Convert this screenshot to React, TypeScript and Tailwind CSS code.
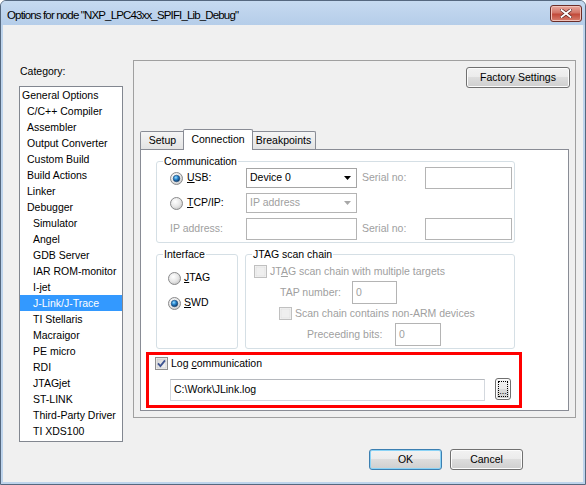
import React from "react";

const categories: { label: string; level: number; selected?: boolean }[] = [
  { label: "General Options", level: 0 },
  { label: "C/C++ Compiler", level: 1 },
  { label: "Assembler", level: 1 },
  { label: "Output Converter", level: 1 },
  { label: "Custom Build", level: 1 },
  { label: "Build Actions", level: 1 },
  { label: "Linker", level: 1 },
  { label: "Debugger", level: 1 },
  { label: "Simulator", level: 2 },
  { label: "Angel", level: 2 },
  { label: "GDB Server", level: 2 },
  { label: "IAR ROM-monitor", level: 2 },
  { label: "I-jet", level: 2 },
  { label: "J-Link/J-Trace", level: 2, selected: true },
  { label: "TI Stellaris", level: 2 },
  { label: "Macraigor", level: 2 },
  { label: "PE micro", level: 2 },
  { label: "RDI", level: 2 },
  { label: "JTAGjet", level: 2 },
  { label: "ST-LINK", level: 2 },
  { label: "Third-Party Driver", level: 2 },
  { label: "TI XDS100", level: 2 },
];

function Radio({ checked }: { checked?: boolean }) {
  return (
    <svg width="13" height="13" viewBox="0 0 13 13" className="shrink-0">
      <defs>
        <radialGradient id="radioBg" cx="40%" cy="35%" r="70%">
          <stop offset="0" stopColor="#ffffff" />
          <stop offset="0.6" stopColor="#e6e6e6" />
          <stop offset="1" stopColor="#c4c4c4" />
        </radialGradient>
        <radialGradient id="radioDot" cx="40%" cy="35%" r="65%">
          <stop offset="0" stopColor="#9fe0ff" />
          <stop offset="0.45" stopColor="#2b8ad2" />
          <stop offset="1" stopColor="#0c3766" />
        </radialGradient>
      </defs>
      <circle cx="6.5" cy="6.5" r="6" fill="url(#radioBg)" stroke="#8a8b8c" />
      {checked && <circle cx="6.5" cy="6.5" r="3.3" fill="url(#radioDot)" stroke="#1c4a78" strokeWidth="0.6" />}
    </svg>
  );
}

function Check({ checked, disabled }: { checked?: boolean; disabled?: boolean }) {
  return (
    <svg width="13" height="13" viewBox="0 0 13 13" className="shrink-0">
      <defs>
        <linearGradient id="checkBg" x1="0" y1="0" x2="1" y2="1">
          <stop offset="0" stopColor="#d6d6d6" />
          <stop offset="1" stopColor="#f6f6f6" />
        </linearGradient>
      </defs>
      <rect x="0.5" y="0.5" width="12" height="12" fill="#f4f4f4" stroke={disabled ? "#c0c0c0" : "#8f8f8f"} />
      <rect x="2" y="2" width="9" height="9" fill={disabled ? "#efefef" : "url(#checkBg)"} stroke={disabled ? "#dcdcdc" : "#c2c2c2"} strokeWidth="0.6" />
      {checked && <path d="M3 6.3 L5.4 9 L10 3.4" fill="none" stroke="#3d5391" strokeWidth="1.8" />}
    </svg>
  );
}

function Arrow({ color }: { color: string }) {
  return (
    <svg width="7" height="4" viewBox="0 0 7 4" className="shrink-0">
      <path d="M0 0 H7 L3.5 4 Z" fill={color} />
    </svg>
  );
}

function Group({ legend, className, children }: { legend: string; className: string; children: React.ReactNode }) {
  return (
    <div className={`relative rounded-[3px] border border-[#d5dfe5] ${className}`}>
      <span className="absolute left-[6px] -top-[8px] bg-white px-[1px] leading-[14px] text-black">{legend}</span>
      {children}
    </div>
  );
}

const button =
  "flex items-center justify-center rounded-[3px] border border-[#707070] bg-[linear-gradient(#f2f2f2,#ebebeb_50%,#dddddd_50%,#cfcfcf)] shadow-[inset_0_0_0_1px_#fcfcfc] text-black";

export default function App() {
  return (
    <div className="w-[586px] h-[485px] bg-white font-['Liberation_Sans',Arial,sans-serif] text-[10.5px] text-black">
      <div className="flex h-full w-full flex-col rounded-t-[6px] border border-[#55687f] bg-[#bed4ec]">
        {/* Title bar */}
        <div className="flex h-[24px] shrink-0 rounded-t-[5px] bg-[linear-gradient(#c6daf0,#b5cde9)]">
          <div className="flex-1 whitespace-nowrap pl-[6px] pt-[7px] text-[11.5px] leading-[14px] tracking-[-0.85px] text-black">
            {'Options for node "NXP_LPC43xx_SPIFI_Lib_Debug"'}
          </div>
          <div className="mt-[4px] mr-[3px] flex h-[17px] w-[32px] items-center justify-center rounded-[3px] border border-[#6b2d28] bg-[linear-gradient(#e9a99f,#d27567_45%,#c24a3a_55%,#d7806f)] shadow-[inset_0_0_0_1px_#f1c3bb]">
            <svg width="12" height="9" viewBox="0 0 12 9">
              <path d="M1.5 1 L10.5 8 M10.5 1 L1.5 8" stroke="#5a2320" strokeWidth="3.2" strokeLinecap="square" />
              <path d="M1.5 1 L10.5 8 M10.5 1 L1.5 8" stroke="#ffffff" strokeWidth="1.8" strokeLinecap="square" />
            </svg>
          </div>
        </div>

        {/* Client area */}
        <div className="mx-[2px] mb-[2px] flex-1 bg-[#f0f0f0]">
          <div className="flex items-start pl-[16px] pt-[35px]">
            {/* Category column */}
            <div className="w-[104px] shrink-0">
              <div className="mt-[4px] h-[14px] pl-[1px] leading-[14px]">Category:</div>
              <div className="mt-[8px] h-[356px] border border-[#828790] bg-white">
                {categories.map((c) => (
                  <div
                    key={c.label}
                    className={`h-[16px] whitespace-nowrap leading-[16px] ${
                      c.level === 0 ? "pl-[2px]" : c.level === 1 ? "pl-[7px]" : "pl-[13px]"
                    } ${c.selected ? "bg-[#3399ff] text-white" : ""}`}
                  >
                    {c.label}
                  </div>
                ))}
              </div>
            </div>

            {/* Options column */}
            <div className="ml-[10px] flex w-[443px] shrink-0 flex-col">
              <div className="flex h-[358px] flex-col border border-[#a0a0a0]">
                <div className={`${button} mt-[6px] mr-[5px] h-[21px] w-[104px] self-end`}>Factory Settings</div>

                {/* Tabs */}
                <div className="ml-[6px] mt-[41px] flex h-[20px] items-end">
                  <div className="flex h-[18px] w-[45px] items-center justify-center rounded-t-[2px] border border-b-0 border-[#898c95] bg-[linear-gradient(#f5f5f5,#e3e3e3)]">
                    Setup
                  </div>
                  <div className="relative z-10 -mb-[1px] -ml-[2px] flex h-[21px] w-[70px] items-start justify-center rounded-t-[2px] border border-b-0 border-[#898c95] bg-white pt-[2px] leading-[14px]">
                    Connection
                  </div>
                  <div className="-ml-[2px] flex h-[18px] w-[65px] items-center justify-center rounded-t-[2px] border border-b-0 border-[#898c95] bg-[linear-gradient(#f5f5f5,#e3e3e3)]">
                    Breakpoints
                  </div>
                </div>

                {/* Tab page */}
                <div className="ml-[6px] flex h-[262px] w-[429px] flex-col border border-[#898c95] bg-white">
                  <Group legend="Communication" className="ml-[15px] mt-[11px] h-[82px] w-[359px]">
                    <div className="mt-[5px] flex h-[22px] items-center pl-[13px]">
                      <div className="flex w-[76px] items-center gap-[4px]">
                        <Radio checked />
                        <span>
                          <span className="underline">U</span>SB:
                        </span>
                      </div>
                      <div className="flex h-[20px] w-[111px] items-center justify-between border border-[#a5a5a5] bg-white pl-[3px] pr-[5px]">
                        <span>Device 0</span>
                        <Arrow color="#000000" />
                      </div>
                      <span className="w-[68px] pl-[5px] text-[#a0a0a0]">Serial no:</span>
                      <div className="h-[22px] w-[87px] border border-[#b4b4b4] bg-white" />
                    </div>
                    <div className="mt-[4px] flex h-[20px] items-center pl-[13px]">
                      <div className="flex w-[76px] items-center gap-[4px]">
                        <Radio />
                        <span>
                          <span className="underline">T</span>CP/IP:
                        </span>
                      </div>
                      <div className="flex h-[20px] w-[111px] items-center justify-between border border-[#b4b4b4] bg-white pl-[3px] pr-[5px] text-[#a0a0a0]">
                        <span>IP address</span>
                        <Arrow color="#a8a8a8" />
                      </div>
                    </div>
                    <div className="mt-[5px] flex h-[22px] items-center pl-[13px]">
                      <span className="w-[76px] text-[#a0a0a0]">IP address:</span>
                      <div className="h-[22px] w-[111px] border border-[#b4b4b4] bg-white" />
                      <span className="w-[68px] pl-[5px] text-[#a0a0a0]">Serial no:</span>
                      <div className="h-[22px] w-[87px] border border-[#b4b4b4] bg-white" />
                    </div>
                  </Group>

                  <div className="ml-[15px] mt-[11px] flex">
                    <Group legend="Interface" className="h-[95px] w-[82px]">
                      <div className="mt-[15px] flex h-[16px] items-center gap-[3px] pl-[11px]">
                        <Radio />
                        <span>
                          <span className="underline">J</span>TAG
                        </span>
                      </div>
                      <div className="mt-[9px] flex h-[16px] items-center gap-[3px] pl-[11px]">
                        <Radio checked />
                        <span>
                          <span className="underline">S</span>WD
                        </span>
                      </div>
                    </Group>

                    <Group legend="JTAG scan chain" className="ml-[7px] h-[95px] w-[270px]">
                      <div className="mt-[10px] flex h-[13px] items-center gap-[3px] pl-[8px] text-[#a0a0a0]">
                        <Check disabled />
                        <span className="whitespace-nowrap">
                          JT<span className="underline">A</span>G scan chain with multiple targets
                        </span>
                      </div>
                      <div className="mt-[3px] flex h-[23px] items-center pl-[34px] text-[#a0a0a0]">
                        <span className="w-[72px]">TAP number:</span>
                        <div className="flex h-[23px] w-[45px] items-center border border-[#b4b4b4] bg-white pl-[3px]">0</div>
                      </div>
                      <div className="mt-[3px] flex h-[13px] items-center gap-[3px] pl-[33px] text-[#a0a0a0]">
                        <Check disabled />
                        <span className="whitespace-nowrap">Scan chain contains non-ARM devices</span>
                      </div>
                      <div className="mt-[3px] flex h-[23px] items-center pl-[61px] text-[#a0a0a0]">
                        <span className="w-[88px]">Preceeding bits:</span>
                        <div className="flex h-[23px] w-[46px] items-center border border-[#b4b4b4] bg-white pl-[3px]">0</div>
                      </div>
                    </Group>
                  </div>

                  {/* Highlighted log section */}
                  <div className="ml-[5px] mt-[3px] h-[56px] w-[376px] border-[3px] border-[#ff0000]">
                    <div className="mt-[2px] flex h-[13px] items-center gap-[3px] pl-[6px]">
                      <Check checked />
                      <span>
                        Log <span className="underline">c</span>ommunication
                      </span>
                    </div>
                    <div className="mt-[8px] flex items-start pl-[21px]">
                      <div className="mt-[1px] flex h-[22px] w-[315px] items-center border border-[#d3d8de] border-t-[#b5b8bd] bg-white pl-[3px]">
                        C:\Work\JLink.log
                      </div>
                      <div className={`${button} ml-[10px] h-[22px] w-[16px] items-end p-[2px]`}>
                        <div className="flex h-full w-full items-end justify-center border border-dotted border-black pb-[1px] text-[9px] leading-[8px]">
                          ...
                        </div>
                      </div>
                    </div>
                  </div>
                </div>
              </div>

              {/* Dialog buttons */}
              <div className="mt-[31px] flex justify-end gap-[8px] pr-[53px]">
                <div className="flex h-[21px] w-[73px] items-center justify-center rounded-[3px] border border-[#3c7fb1] bg-[linear-gradient(#f2f2f2,#ebebeb_50%,#dddddd_50%,#cfcfcf)] shadow-[inset_0_0_0_1px_#8ad3f6]">
                  OK
                </div>
                <div className={`${button} h-[21px] w-[73px]`}>Cancel</div>
              </div>
            </div>
          </div>
        </div>
      </div>
    </div>
  );
}
